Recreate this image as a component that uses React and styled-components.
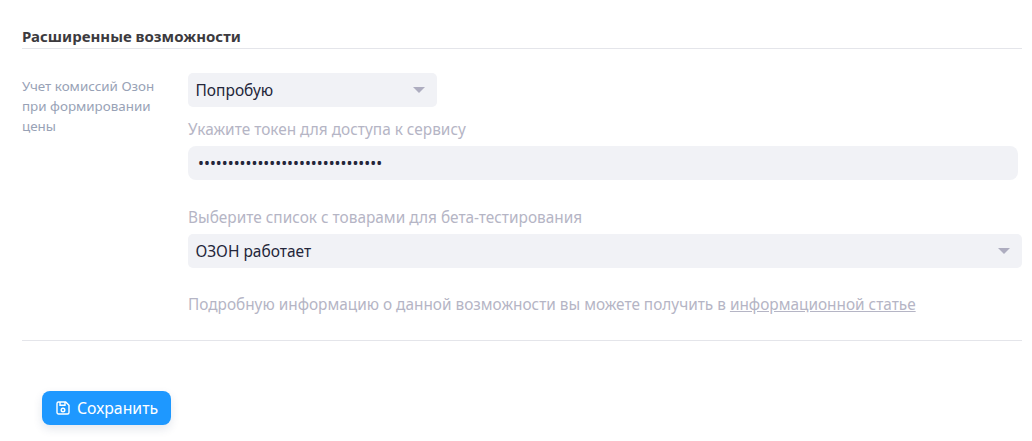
import styled, { createGlobalStyle } from 'styled-components';

const GlobalStyle = createGlobalStyle`
  body {
    margin: 0;
    background: #fff;
    font-family: 'Noto Sans', 'Open Sans', sans-serif;
  }
`;

function SaveIcon() {
  return (
    <svg width="14" height="14" viewBox="0 0 14 14" fill="none" stroke="currentColor" strokeWidth="1.4">
      <path d="M2.5 1h7.2L13 4.3v7.2a1.5 1.5 0 0 1-1.5 1.5h-9A1.5 1.5 0 0 1 1 11.5v-9A1.5 1.5 0 0 1 2.5 1z" />
      <path d="M4 1v3.2h5V1" />
      <circle cx="7" cy="9" r="1.8" />
    </svg>
  );
}

function Select({ value, $width }) {
  return (
    <SelectBox $width={$width}>
      <span>{value}</span>
      <Caret />
    </SelectBox>
  );
}

export default function App() {
  return (
    <Page>
      <GlobalStyle />
      <Heading>Расширенные возможности</Heading>
      <Row>
        <SideLabel>Учет комиссий Озон при формировании цены</SideLabel>
        <Fields>
          <Select value="Попробую" $width="249px" />
          <FieldLabel>Укажите токен для доступа к сервису</FieldLabel>
          <TokenInput type="password" readOnly value="0123456789012345678901234567890" />
          <FieldLabel $spaced>Выберите список с товарами для бета-тестирования</FieldLabel>
          <Select value="ОЗОН работает" $width="100%" />
          <Hint>
            Подробную информацию о данной возможности вы можете получить в{' '}
            <a href="#article">информационной статье</a>
          </Hint>
        </Fields>
      </Row>
      <Footer>
        <SaveButton>
          <SaveIcon />
          Сохранить
        </SaveButton>
      </Footer>
    </Page>
  );
}

const Page = styled.div`
  width: 1000px;
  padding: 26px 10px 16px 22px;
`;

const Heading = styled.h3`
  margin: 0;
  height: 22px;
  line-height: 20px;
  font-size: 15px;
  font-weight: 700;
  color: #3c3a3e;
  border-bottom: 1px solid #e4e5ea;
`;

const Row = styled.div`
  display: flex;
  padding: 24px 0 25px;
  border-bottom: 1px solid #e4e5ea;
`;

const SideLabel = styled.div`
  width: 136px;
  margin-right: 30px;
  padding-top: 3px;
  font-size: 13.4px;
  line-height: 20px;
  color: #98a2b6;
`;

const Fields = styled.div`
  flex: 1;
`;

const SelectBox = styled.div`
  display: flex;
  align-items: center;
  justify-content: space-between;
  box-sizing: border-box;
  width: ${({ $width }) => $width};
  height: 34px;
  padding: 0 12px 0 7.5px;
  border-radius: 5px;
  background: #f1f2f6;
  font-size: 15.5px;
  color: #24263a;
`;

const Caret = styled.span`
  width: 0;
  height: 0;
  border-left: 6px solid transparent;
  border-right: 6px solid transparent;
  border-top: 6px solid #aeadc0;
`;

const FieldLabel = styled.div`
  margin-top: ${({ $spaced }) => ($spaced ? '28px' : '13px')};
  margin-bottom: 6px;
  font-size: 15.4px;
  line-height: 20px;
  color: #b5b5c5;
`;

const TokenInput = styled.input`
  display: block;
  box-sizing: border-box;
  width: 830px;
  height: 34px;
  padding: 0 10px;
  border: 0;
  outline: 0;
  border-radius: 8px;
  background: #f1f2f6;
  font-family: inherit;
  font-size: 15.8px;
  color: #24263a;
`;

const Hint = styled.p`
  margin: 27px 0 0;
  font-size: 15.37px;
  line-height: 20px;
  color: #b5b5c5;

  a {
    color: inherit;
  }
`;

const Footer = styled.div`
  padding: 50px 0 0 20px;
`;

const SaveButton = styled.button`
  display: inline-flex;
  align-items: center;
  gap: 7px;
  height: 34px;
  padding: 0 13px 0 14px;
  border: 0;
  border-radius: 8px;
  background: #1e98ff;
  box-shadow: 0 4px 10px rgba(30, 60, 110, 0.12);
  font-family: inherit;
  font-size: 15.8px;
  color: #fff;
`;
